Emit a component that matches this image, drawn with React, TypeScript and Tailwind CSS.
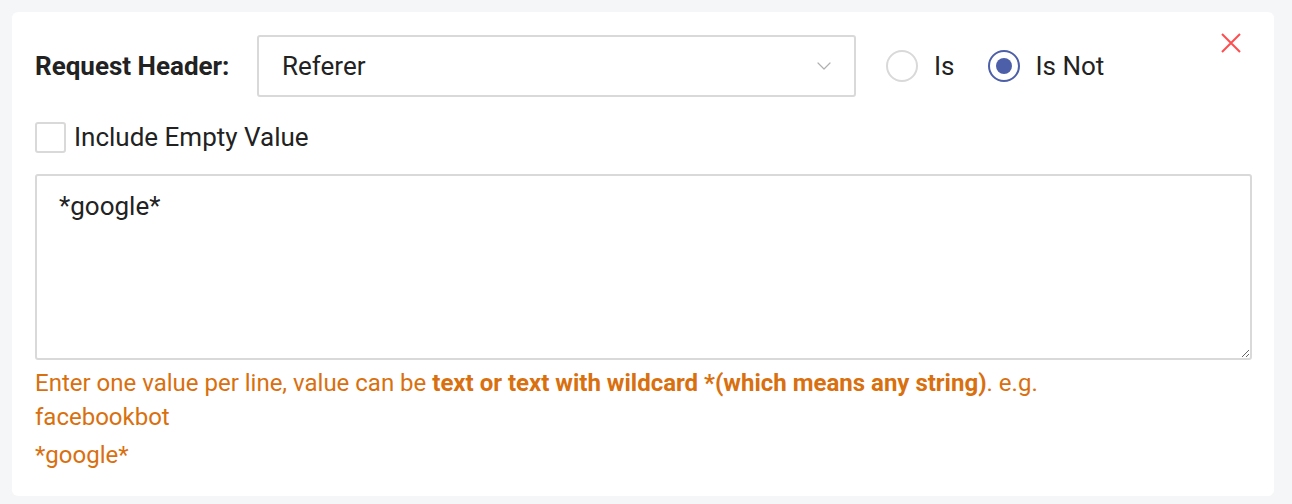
import { ChevronDown } from "lucide-react";

export default function App() {
  return (
    <div className="h-[504px] w-[1292px] bg-[#f5f6f8] p-3 font-['Roboto',sans-serif] text-[26px] text-[#222]">
      <div className="relative h-[484px] w-[1262px] rounded-md bg-white px-[23px] pt-[23px]">
        <button className="absolute left-[1208px] top-[20px] text-[#ff4d4f]">
          <svg width="22" height="22" viewBox="0 0 22 22" fill="none" stroke="currentColor" strokeWidth="2">
            <path d="M2 2 L20 20 M20 2 L2 20" />
          </svg>
        </button>

        <div className="flex items-center">
          <label className="w-[222px] font-bold">Request Header:</label>
          <div className="flex h-[62px] w-[599px] items-center justify-between rounded-[3px] border-2 border-[#d9d9d9] pl-[23px] pr-[18px]">
            <span>Referer</span>
            <ChevronDown className="h-6 w-6 text-[#b0b0b0]" strokeWidth={1.2} />
          </div>
          <div className="ml-[30px] flex items-center gap-4">
            <span className="h-8 w-8 rounded-full border-2 border-[#d9d9d9]" />
            <span>Is</span>
          </div>
          <div className="ml-[33px] flex items-center gap-4">
            <span className="flex h-8 w-8 items-center justify-center rounded-full border-2 border-[#4d5fa8]">
              <span className="h-4 w-4 rounded-full bg-[#4d5fa8]" />
            </span>
            <span>Is Not</span>
          </div>
        </div>

        <div className="mt-[21px] flex items-center gap-2">
          <span className="h-[31px] w-[31px] rounded-[3px] border-2 border-[#d9d9d9]" />
          <span>Include Empty Value</span>
        </div>

        <textarea
          className="mt-[17px] block h-[186px] w-[1217px] rounded-[3px] border-2 border-[#d9d9d9] px-[22px] py-[12px] leading-[36px] outline-none"
          defaultValue="*google*"
        />

        <div className="mt-[6px] text-[24px] leading-[34px] text-[#d9700f]">
          <p>
            Enter one value per line, value can be{" "}
            <b>text or text with wildcard *(which means any string)</b>. e.g.
          </p>
          <p>facebookbot</p>
          <p className="mt-[4px]">*google*</p>
        </div>
      </div>
    </div>
  );
}
